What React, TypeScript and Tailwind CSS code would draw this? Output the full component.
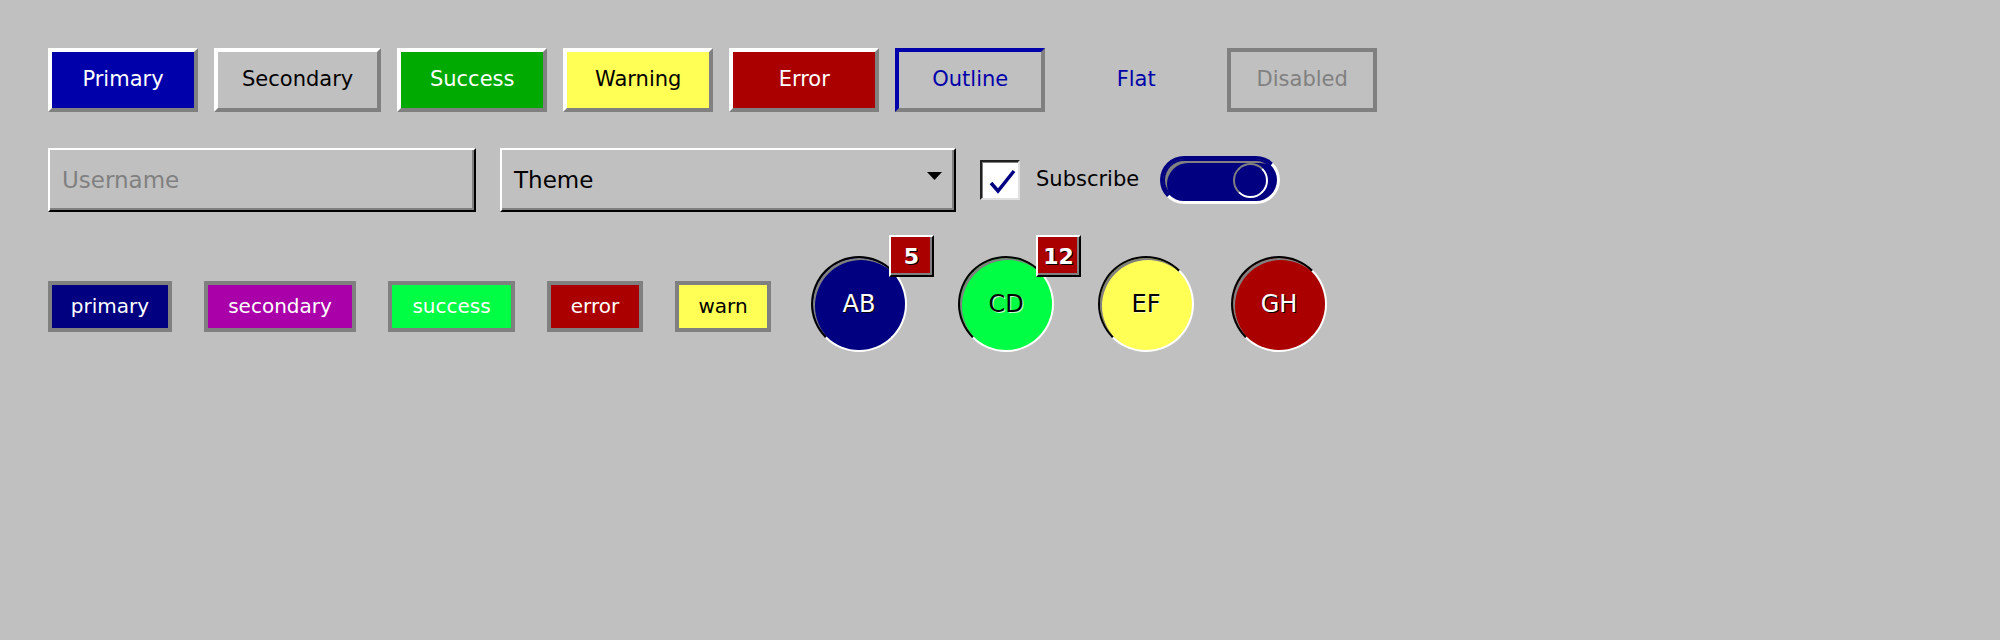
import React from 'react'

const raised = 'border-4 border-t-white border-l-white border-r-[#808080] border-b-[#808080]'
const bevel =
  'border-2 border-t-white border-l-white border-r-black border-b-black shadow-[inset_-2px_-2px_0_#808080]'

function Btn({ label, cls }: { label: string; cls: string }) {
  return (
    <button className={`h-16 min-w-[150px] px-6 text-[21px] flex items-center justify-center ${cls}`}>
      {label}
    </button>
  )
}

function Chip({ label, cls }: { label: string; cls: string }) {
  return (
    <span className={`h-[51px] border-4 border-[#808080] text-[20px] flex items-center justify-center ${cls}`}>
      {label}
    </span>
  )
}

function Avatar({ initials, cls, badge, ml }: { initials: string; cls: string; badge?: string; ml: string }) {
  return (
    <div className={`relative ${ml}`}>
      <div
        className={`w-24 h-24 rounded-full border-2 border-t-black border-l-black border-r-white border-b-white shadow-[inset_2px_2px_0_#808080] flex items-center justify-center text-[24px] ${cls}`}
      >
        {initials}
      </div>
      {badge && (
        <span
          className={`absolute -top-[21px] -right-[27px] w-[45px] h-[42px] bg-[#aa0000] text-white text-[22px] font-bold flex items-center justify-center [text-shadow:1px_1px_0_#000] ${bevel}`}
        >
          {badge}
        </span>
      )}
    </div>
  )
}

export default function App() {
  return (
    <div className="min-h-screen w-full bg-[#c0c0c0] p-12 font-['DejaVu_Sans',sans-serif]">
      {/* buttons */}
      <div className="flex gap-4">
        <Btn label="Primary" cls={`bg-[#0000aa] text-white ${raised}`} />
        <Btn label="Secondary" cls={`bg-[#c0c0c0] text-black ${raised}`} />
        <Btn label="Success" cls={`bg-[#00aa00] text-white ${raised}`} />
        <Btn label="Warning" cls={`bg-[#ffff55] text-black ${raised}`} />
        <Btn label="Error" cls={`bg-[#aa0000] text-white ${raised}`} />
        <Btn
          label="Outline"
          cls="text-[#0000aa] border-4 border-t-[#0000aa] border-l-[#0000aa] border-r-[#808080] border-b-[#808080]"
        />
        <Btn label="Flat" cls="text-[#0000aa]" />
        <Btn label="Disabled" cls="text-[#808080] border-4 border-[#808080]" />
      </div>

      {/* form controls */}
      <div className="mt-8 h-[72px] flex items-center">
        <div className={`w-[428px] h-16 flex items-center pl-3 text-[23px] text-[#808080] bg-[#c0c0c0] ${bevel}`}>
          Username
        </div>
        <div className={`ml-6 w-[456px] h-16 flex items-center justify-between pl-3 pr-3 text-[23px] text-black ${bevel}`}>
          <span>Theme</span>
          <svg width="15" height="8" viewBox="0 0 15 8" className="-mt-2">
            <path d="M0 0 L15 0 L7.5 8 Z" fill="#000" />
          </svg>
        </div>
        <div className="ml-6 w-10 h-10 bg-white border-2 border-t-[#202020] border-l-[#202020] border-r-[#e0e0e0] border-b-[#e0e0e0] shadow-[inset_1px_1px_0_#808080] flex items-center justify-center">
          <svg width="36" height="36" viewBox="0 0 36 36">
            <path d="M9 21 L16 29 L32 9" fill="none" stroke="#000080" strokeWidth="3.5" />
          </svg>
        </div>
        <span className="ml-4 text-[21px] text-black">Subscribe</span>
        <div className="ml-[21px] w-[120px] h-12 rounded-full bg-[#000080] border-[3px] border-t-[#000080] border-l-[#000080] border-r-white border-b-white shadow-[inset_0_0_0_2px_#000080,inset_4px_4px_0_#808080] flex items-center justify-end pr-[9px]">
          <span className="w-[35px] h-[35px] rounded-full bg-[#000080] border-2 border-t-[#808080] border-l-[#808080] border-r-white border-b-white" />
        </div>
      </div>

      {/* chips and avatars */}
      <div className="mt-8 h-28 flex items-center">
        <div className="flex gap-8 mt-[4px]">
          <Chip label="primary" cls="w-[124px] bg-[#000080] text-white" />
          <Chip label="secondary" cls="w-[152px] bg-[#aa00aa] text-white" />
          <Chip label="success" cls="w-[127px] bg-[#00ff44] text-white" />
          <Chip label="error" cls="w-[96px] bg-[#aa0000] text-white" />
          <Chip label="warn" cls="w-[96px] bg-[#ffff55] text-black" />
        </div>
        <Avatar
          initials="AB"
          badge="5"
          ml="ml-[40px]"
          cls="bg-[#000080] text-white [text-shadow:1px_1px_0_#000]"
        />
        <Avatar
          initials="CD"
          badge="12"
          ml="ml-[51px]"
          cls="bg-[#00ff44] text-black [text-shadow:1px_1px_0_#bfffd0]"
        />
        <Avatar
          initials="EF"
          ml="ml-[44px]"
          cls="bg-[#ffff55] text-black [text-shadow:1px_1px_0_#ffffc0]"
        />
        <Avatar
          initials="GH"
          ml="ml-[37px]"
          cls="bg-[#aa0000] text-white [text-shadow:1px_1px_0_#000]"
        />
      </div>
    </div>
  )
}
